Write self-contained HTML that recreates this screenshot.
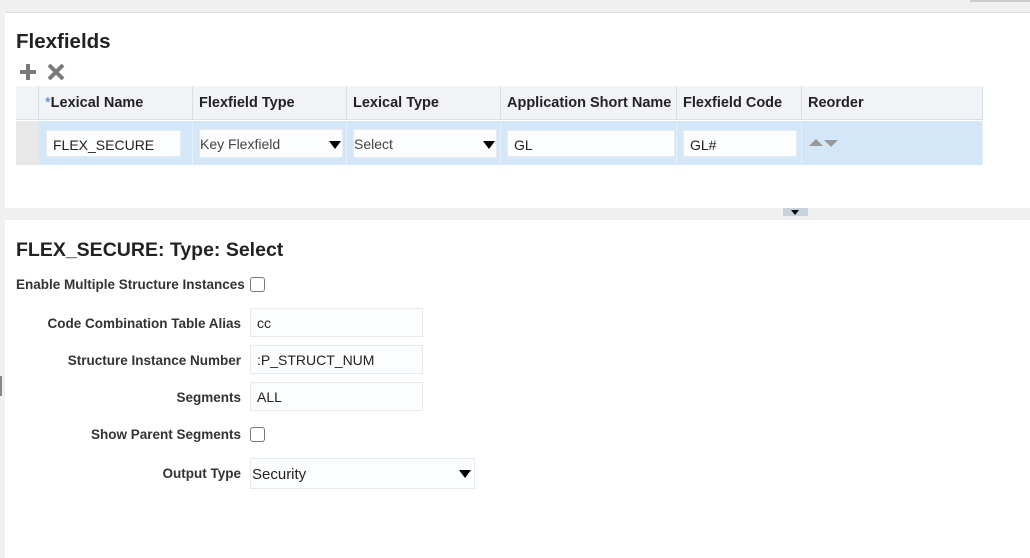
<!DOCTYPE html>
<html><head><style>
*{box-sizing:border-box;margin:0;padding:0}
body{width:1030px;height:558px;background:#f0f0f0;font-family:"Liberation Sans",Arial,sans-serif;position:relative;overflow:hidden;color:#333}
.a{position:absolute}
.p{background:#fff}
.th{position:absolute;top:86px;height:34px;background:#f1f3f6;border-right:1px solid #d6dfe6;border-bottom:1px solid #d6dfe6;font-weight:bold;font-size:14.5px;color:#222;padding:9px 0 0 6px;white-space:nowrap}
.td{position:absolute;top:121px;height:44px;background:#d3e7f9;border-right:1px solid #e6f0fa}
.in{position:absolute;background:#fcfdfe;border:1px solid #e4eaf0;font-size:14px;color:#222;padding:6px 0 0 6px}
.lb{position:absolute;right:789px;font-weight:bold;font-size:13.5px;color:#333;text-align:right;white-space:nowrap}
.cb{position:absolute;width:15px;height:15px;border:1px solid #777;border-radius:3px;background:#fff}
.tri{position:absolute;width:0;height:0;border-left:6px solid transparent;border-right:6px solid transparent;border-top:8px solid #000}
</style></head><body>
<div class="a" style="left:970px;top:0;width:60px;height:2px;background:#ccc"></div>
<div class="a p" style="left:5px;top:12px;width:1025px;height:196px;border-top:1px solid #ddd"></div>
<div class="a p" style="left:5px;top:220px;width:1025px;height:338px"></div>
<div class="a" style="left:783px;top:208px;width:25px;height:8px;background:#c8d2dc"></div>
<div class="tri" style="left:791px;top:210px;border-left-width:4px;border-right-width:4px;border-top-width:5px"></div>
<div class="a" style="left:0;top:376px;width:2px;height:20px;background:#888"></div>
<div class="a" style="left:16px;top:30px;font-size:20.5px;font-weight:bold;color:#222">Flexfields</div>
<svg class="a" style="left:18px;top:63px" width="50" height="20" viewBox="0 0 50 20">
<path d="M10 1v16M2 9h16" stroke="#7a7a7a" stroke-width="4"/>
<path d="M31 2l14 14M45 2L31 16" stroke="#7a7a7a" stroke-width="4"/>
</svg>
<div class="th" style="left:16px;width:23px"></div>
<div class="th" style="left:39px;width:154px"><span style="color:#3a7bd5;font-weight:normal">*</span>Lexical Name</div>
<div class="th" style="left:193px;width:154px">Flexfield Type</div>
<div class="th" style="left:347px;width:154px">Lexical Type</div>
<div class="th" style="left:501px;width:176px">Application Short Name</div>
<div class="th" style="left:677px;width:125px">Flexfield Code</div>
<div class="th" style="left:802px;width:181px">Reorder</div>
<div class="a" style="left:16px;top:121px;width:23px;height:44px;background:#e8e8e8"></div>
<div class="td" style="left:39px;width:154px"></div>
<div class="td" style="left:193px;width:154px"></div>
<div class="td" style="left:347px;width:154px"></div>
<div class="td" style="left:501px;width:176px"></div>
<div class="td" style="left:677px;width:125px"></div>
<div class="td" style="left:802px;width:181px"></div>
<div class="in" style="left:46px;top:130px;width:135px;height:27px">FLEX_SECURE</div>
<div class="in" style="left:199px;top:129px;width:144px;height:29px;padding:6px 0 0 0;color:#444">Key Flexfield</div>
<div class="tri" style="left:329px;top:141px"></div>
<div class="in" style="left:353px;top:129px;width:144px;height:29px;padding:6px 0 0 0;color:#444">Select</div>
<div class="tri" style="left:483px;top:141px"></div>
<div class="in" style="left:507px;top:130px;width:168px;height:27px">GL</div>
<div class="in" style="left:683px;top:130px;width:114px;height:27px">GL#</div>
<div class="a" style="left:809px;top:139px;border-left:7px solid transparent;border-right:7px solid transparent;border-bottom:7px solid #999"></div>
<div class="a" style="left:824px;top:140px;border-left:7px solid transparent;border-right:7px solid transparent;border-top:7px solid #999"></div>
<div class="a" style="left:16px;top:239px;font-size:19.5px;font-weight:bold;color:#222">FLEX_SECURE: Type: Select</div>
<div class="a" style="left:16px;top:277px;font-weight:bold;font-size:13.5px">Enable Multiple Structure Instances</div>
<div class="cb" style="left:250px;top:277px"></div>
<div class="lb" style="top:316px">Code Combination Table Alias</div>
<div class="lb" style="top:353px">Structure Instance Number</div>
<div class="lb" style="top:390px">Segments</div>
<div class="lb" style="top:427px">Show Parent Segments</div>
<div class="lb" style="top:466px">Output Type</div>
<div class="in" style="left:250px;top:308px;width:173px;height:29px">cc</div>
<div class="in" style="left:250px;top:345px;width:173px;height:29px">:P_STRUCT_NUM</div>
<div class="in" style="left:250px;top:382px;width:173px;height:29px">ALL</div>
<div class="cb" style="left:250px;top:427px"></div>
<div class="in" style="left:250px;top:458px;width:225px;height:31px;padding:7px 0 0 1px;font-size:15px">Security</div>
<div class="tri" style="left:459px;top:470px"></div>
</body></html>
